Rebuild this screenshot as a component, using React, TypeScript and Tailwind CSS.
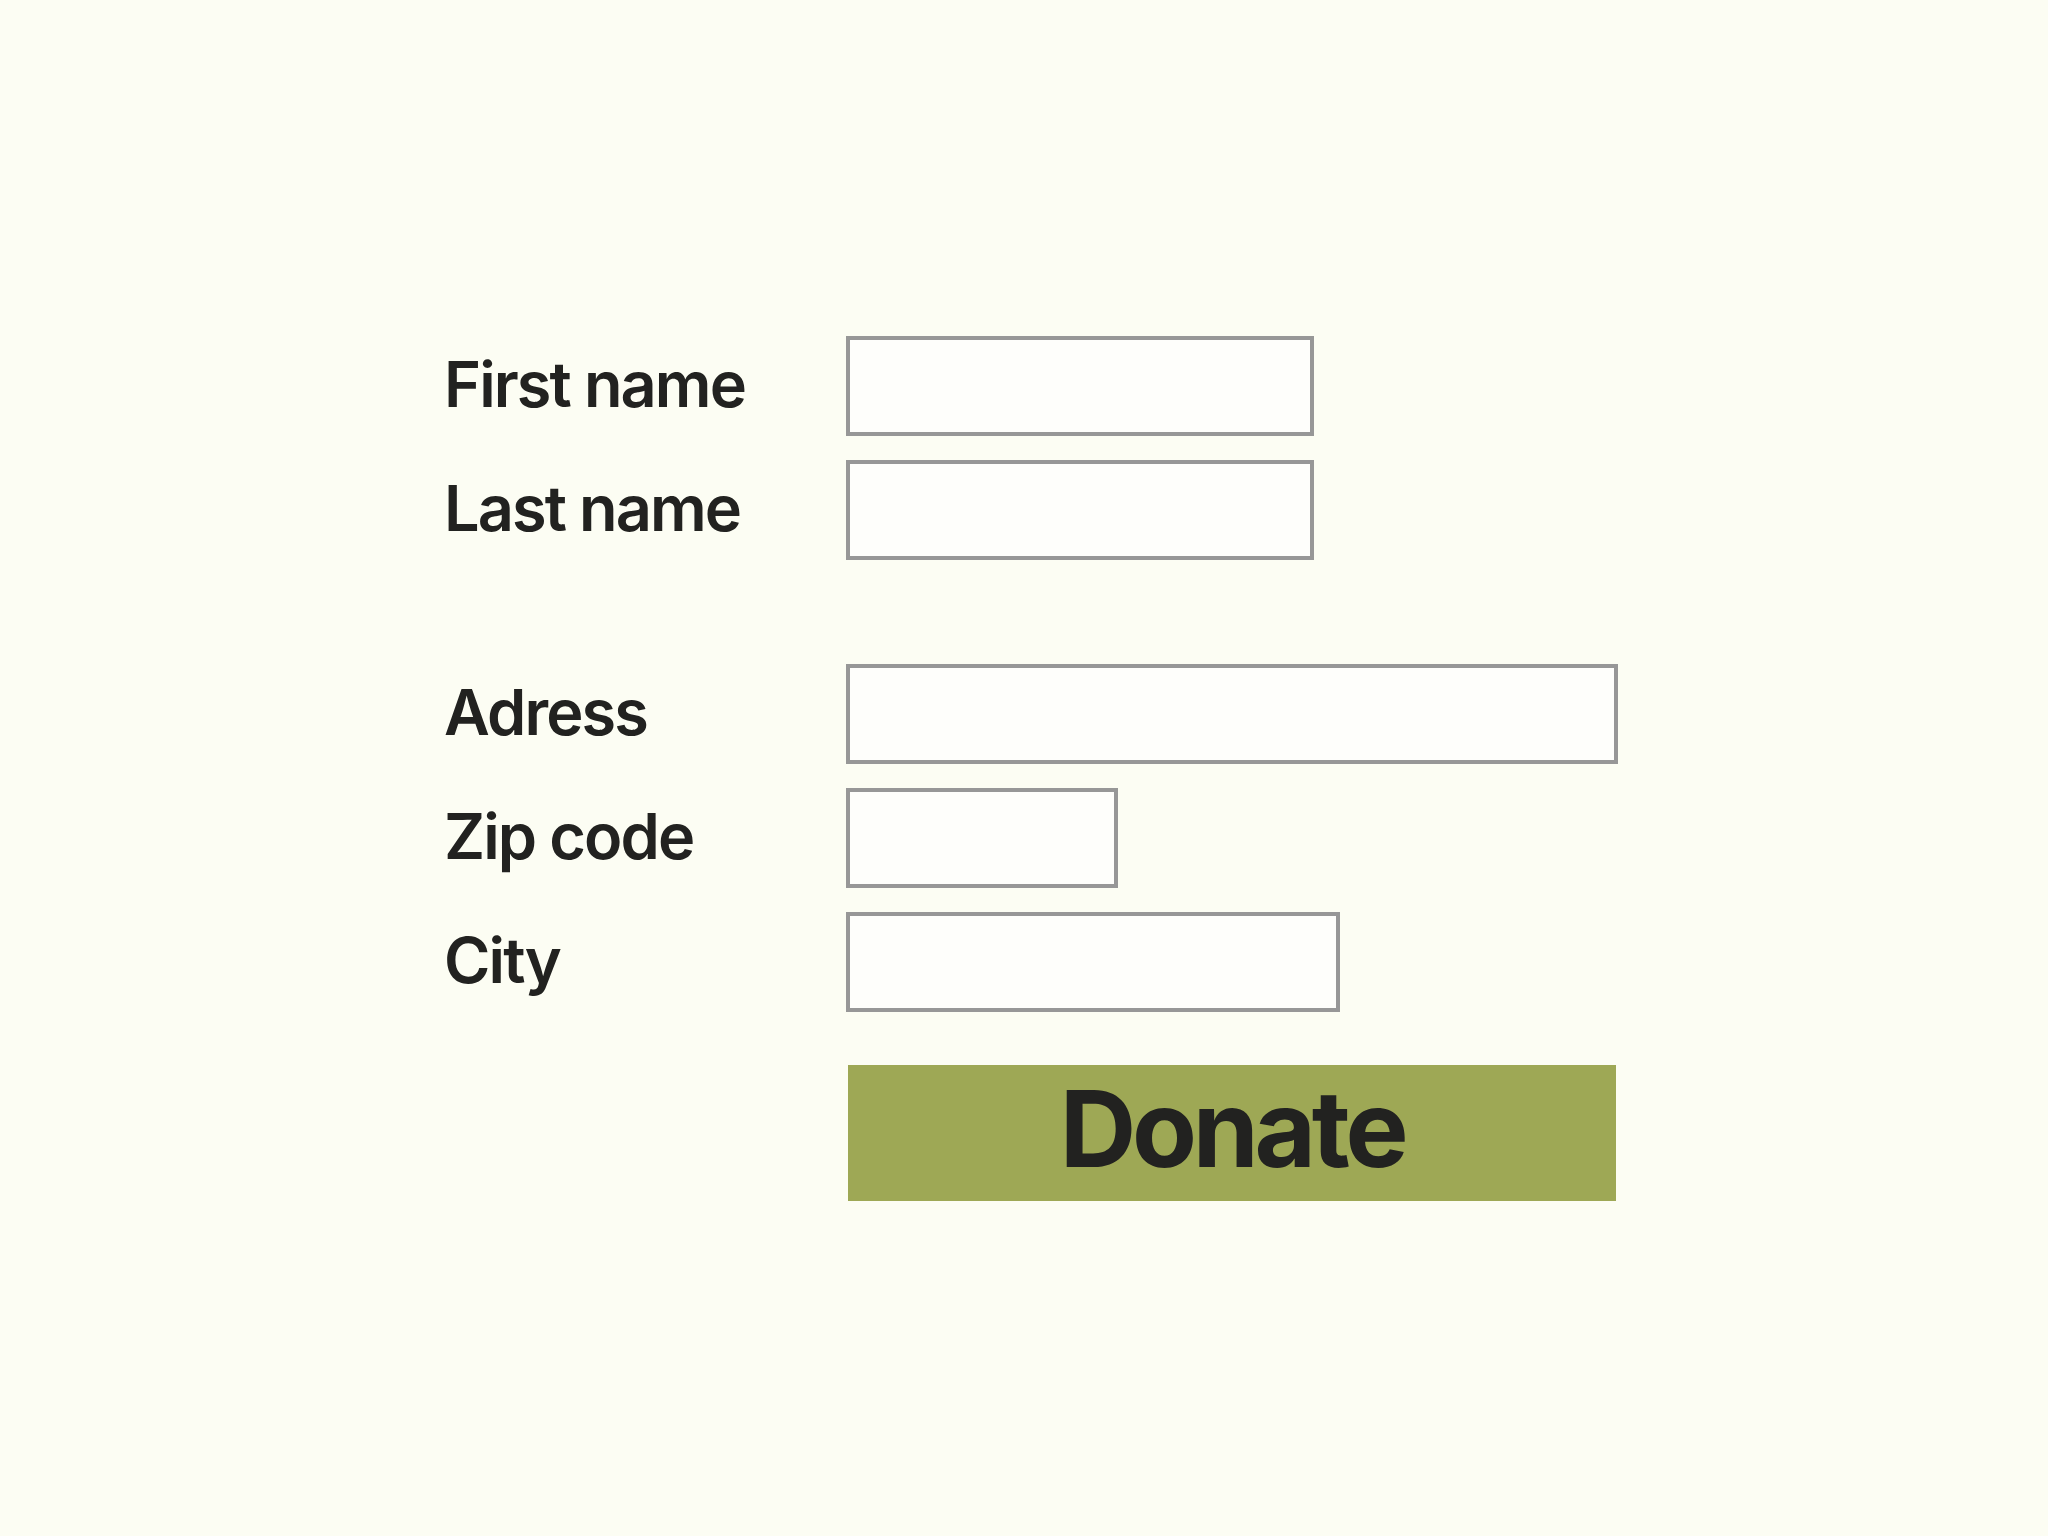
import React from "react";

type Field = {
  label: string;
  width: string;
  spaced?: boolean;
};

const fields: Field[] = [
  { label: "First name", width: "w-[468px]" },
  { label: "Last name", width: "w-[468px]" },
  { label: "Adress", width: "w-[772px]", spaced: true },
  { label: "Zip code", width: "w-[272px]" },
  { label: "City", width: "w-[494px]" },
];

function FormRow({ label, width, spaced }: Field) {
  return (
    <div className={`flex h-[100px] items-center ${spaced ? "mt-[104px]" : "mt-[24px] first:mt-0"}`}>
      <label className="w-[402px] shrink-0 pb-[4px] text-[63px] font-semibold leading-none tracking-[-0.03em] text-[#222220]">
        {label}
      </label>
      <input
        type="text"
        className={`h-[100px] ${width} border-[4px] border-[#979797] bg-[#fefefb] outline-none`}
      />
    </div>
  );
}

export default function App() {
  return (
    <div
      className="min-h-screen bg-[#fcfdf3] pl-[444px] pt-[336px]"
      style={{ fontFamily: "Inter, 'Noto Sans', sans-serif" }}
    >
      <form className="flex flex-col" onSubmit={(e) => e.preventDefault()}>
        {fields.map((f) => (
          <FormRow key={f.label} {...f} />
        ))}

        {/* Submit */}
        <div className="mt-[53px] flex">
          <div className="w-[404px] shrink-0" />
          <button
            type="submit"
            className="flex h-[136px] w-[768px] items-center justify-center bg-[#9ea855] pb-[8px] text-[106px] font-bold leading-none tracking-[-0.04em] text-[#222220]"
          >
            Donate
          </button>
        </div>
      </form>
    </div>
  );
}
